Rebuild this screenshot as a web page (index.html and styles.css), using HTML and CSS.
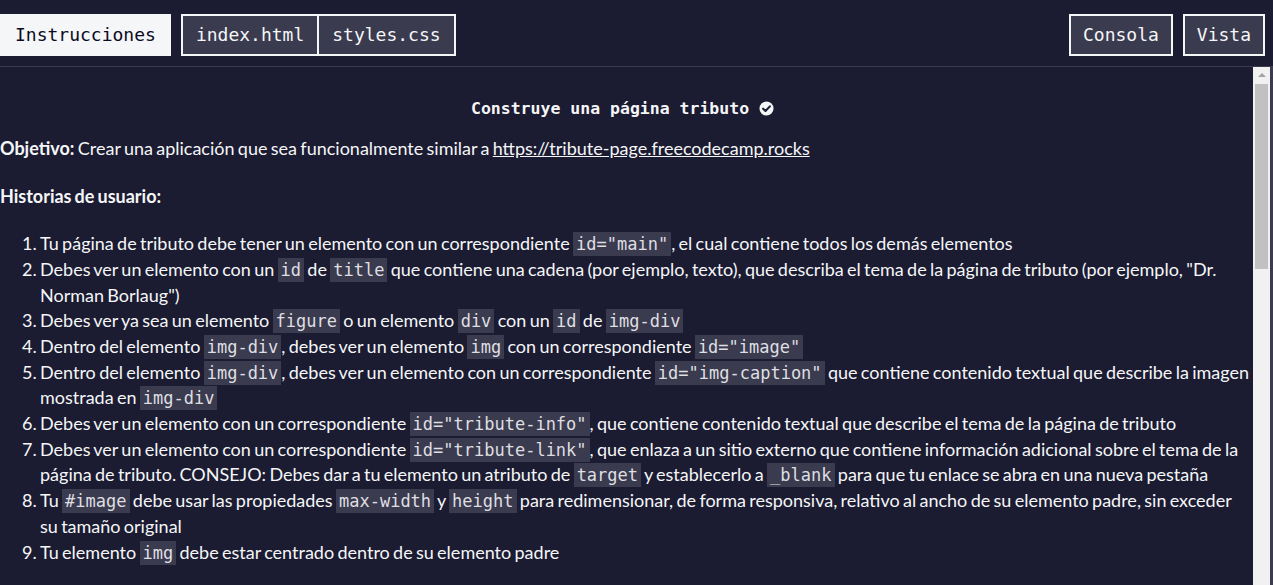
FILE: index.html
```html
<!DOCTYPE html>
<html lang="es">
<head>
<meta charset="utf-8">
<title>Construye una página tributo</title>
<link rel="stylesheet" href="styles.css">
</head>
<body>
<header class="toolbar">
  <div class="tabs-left">
    <button class="tab tab-active">Instrucciones</button>
    <div class="file-tabs">
      <button class="tab tab-outline">index.html</button>
      <button class="tab tab-outline tab-joined">styles.css</button>
    </div>
  </div>
  <div class="tabs-right">
    <button class="tab tab-outline tab-narrow">Consola</button>
    <button class="tab tab-outline tab-narrow">Vista</button>
  </div>
</header>
<main class="panel">
  <div class="content">
    <h1 class="title">Construye una página tributo <svg class="check" width="15" height="15" viewBox="0 0 16 16"><circle cx="8" cy="8" r="7.5" fill="#f5f6f7"/><path d="M4.4 8.2 L6.9 10.6 L11.6 5.7" fill="none" stroke="#1b1b32" stroke-width="2.2" stroke-linecap="round" stroke-linejoin="round"/></svg></h1>
    <p class="objective"><strong>Objetivo:</strong> Crear una aplicación que sea funcionalmente similar a <a href="#">https://tribute-page.freecodecamp.rocks</a></p>
    <p class="stories-title"><strong>Historias de usuario:</strong></p>
    <ol class="stories">
      <li>Tu página de tributo debe tener un elemento con un correspondiente <code>id="main"</code>, el cual contiene todos los demás elementos</li>
      <li>Debes ver un elemento con un <code>id</code> de <code>title</code> que contiene una cadena (por ejemplo, texto), que describa el tema de la página de tributo (por ejemplo, "Dr. Norman Borlaug")</li>
      <li>Debes ver ya sea un elemento <code>figure</code> o un elemento <code>div</code> con un <code>id</code> de <code>img-div</code></li>
      <li>Dentro del elemento <code>img-div</code>, debes ver un elemento <code>img</code> con un correspondiente <code>id="image"</code></li>
      <li>Dentro del elemento <code>img-div</code>, debes ver un elemento con un correspondiente <code>id="img-caption"</code> que contiene contenido textual que describe la imagen mostrada en <code>img-div</code></li>
      <li>Debes ver un elemento con un correspondiente <code>id="tribute-info"</code>, que contiene contenido textual que describe el tema de la página de tributo</li>
      <li>Debes ver un elemento con un correspondiente <code>id="tribute-link"</code>, que enlaza a un sitio externo que contiene información adicional sobre el tema de la página de tributo. CONSEJO: Debes dar a tu elemento un atributo de <code>target</code> y establecerlo a <code>_blank</code> para que tu enlace se abra en una nueva pestaña</li>
      <li>Tu <code>#image</code> debe usar las propiedades <code>max-width</code> y <code>height</code> para redimensionar, de forma responsiva, relativo al ancho de su elemento padre, sin exceder su tamaño original</li>
      <li>Tu elemento <code>img</code> debe estar centrado dentro de su elemento padre</li>
    </ol>
  </div>
  <div class="scrollbar">
    <div class="scroll-up"></div>
    <div class="scroll-thumb"></div>
  </div>
</main>
</body>
</html>
```
FILE: styles.css
```css
* { box-sizing: border-box; }
html, body { margin: 0; padding: 0; height: 100%; }
body {
  background: #1b1b32;
  color: #f5f6f7;
  font-family: Lato, "Noto Sans", sans-serif;
  font-size: 18px;
  line-height: 1.42857;
  overflow: hidden;
  display: flex;
  flex-direction: column;
}
.toolbar {
  height: 67px;
  flex: 0 0 67px;
  border-bottom: 1px solid #3b3b4f;
  display: flex;
  justify-content: space-between;
  align-items: flex-start;
  padding: 14px 8px 0 0;
}
.tabs-left, .tabs-right, .file-tabs { display: flex; }
.tabs-left { gap: 10px; }
.tabs-right { gap: 10px; }
.tab {
  font-family: "DejaVu Sans Mono", monospace;
  font-size: 18px;
  height: 42px;
  line-height: 38px;
  padding: 0 13px;
  margin: 0;
  border: 2px solid #f5f6f7;
  background: #3b3b4f;
  color: #f5f6f7;
  cursor: pointer;
}
.tab-narrow { padding: 0 12px; }
.tab-active {
  background: #f5f6f7;
  color: #0a0a23;
}
.tab-joined { margin-left: -2px; }
.panel {
  flex: 1;
  display: flex;
  min-height: 0;
  border-right: 3px solid #3b3b4f;
}
.content {
  flex: 1;
  min-width: 0;
  overflow: hidden;
  padding: 29px 0 0 0;
  word-spacing: -1.3px;
}
.title {
  font-family: "DejaVu Sans Mono", monospace;
  font-size: 16.5px;
  font-weight: bold;
  text-align: center;
  margin: 0 0 14px;
  line-height: 25.7px;
  padding-right: 8px;
  word-spacing: 0;
}
.check { vertical-align: -2px; }
p { margin: 0 0 22px; }
.objective { margin-bottom: 23px; }
.stories-title { margin-bottom: 21px; }
strong { font-weight: bold; }
a { color: #f5f6f7; text-decoration: underline; }
.stories {
  margin: 0;
  padding-left: 40px;
  padding-right: 2.5px;
}
code {
  font-family: "DejaVu Sans Mono", monospace;
  font-size: 17px;
  background: #3b3b4f;
  color: #dfdfe2;
  padding: 2px 3px;
  word-spacing: 0;
}
.scrollbar {
  flex: 0 0 17px;
  background: #f1f1f1;
  display: flex;
  flex-direction: column;
  align-items: center;
}
.scroll-up {
  margin-top: 6px;
  width: 0;
  height: 0;
  border-left: 4px solid transparent;
  border-right: 4px solid transparent;
  border-bottom: 4px solid #a3a3a3;
}
.scroll-thumb {
  margin-top: 7px;
  width: 13px;
  height: 185px;
  background: #c1c1c1;
}
```
